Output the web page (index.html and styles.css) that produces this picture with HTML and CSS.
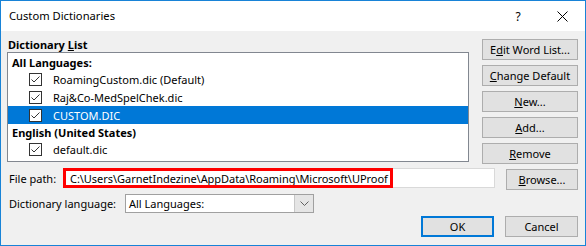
FILE: index.html
```html
<!DOCTYPE html>
<html>
<head>
<meta charset="utf-8">
<link rel="stylesheet" href="styles.css">
</head>
<body>
<div class="window">
  <div class="titlebar">
    <span class="title">Custom Dictionaries</span>
    <span class="help">?</span>
    <svg class="close" width="11" height="11" viewBox="0 0 11 11"><path d="M0.5 0.5 L10.5 10.5 M10.5 0.5 L0.5 10.5" stroke="#000" stroke-width="1" fill="none"/></svg>
  </div>
  <div class="content">
    <div class="top">
      <div class="listcol">
        <div class="listlabel">Dictionary <u>L</u>ist</div>
        <div class="listbox">
          <div class="group">All Languages:</div>
          <div class="item">
            <svg class="cb" width="13" height="13" viewBox="0 0 13 13"><rect x="0.5" y="0.5" width="12" height="12" fill="#fff" stroke="#333"/><path d="M2.5 6.5 L5 9 L10.5 3.5" stroke="#333" stroke-width="1" fill="none"/></svg>
            <span>RoamingCustom.dic (Default)</span>
          </div>
          <div class="item">
            <svg class="cb" width="13" height="13" viewBox="0 0 13 13"><rect x="0.5" y="0.5" width="12" height="12" fill="#fff" stroke="#333"/><path d="M2.5 6.5 L5 9 L10.5 3.5" stroke="#333" stroke-width="1" fill="none"/></svg>
            <span>Raj&amp;Co-MedSpelChek.dic</span>
          </div>
          <div class="item selected">
            <svg class="cb" width="13" height="13" viewBox="0 0 13 13"><rect x="0.5" y="0.5" width="12" height="12" fill="#fff" stroke="#333"/><path d="M2.5 6.5 L5 9 L10.5 3.5" stroke="#333" stroke-width="1" fill="none"/></svg>
            <span>CUSTOM.DIC</span>
          </div>
          <div class="group">English (United States)</div>
          <div class="item">
            <svg class="cb" width="13" height="13" viewBox="0 0 13 13"><rect x="0.5" y="0.5" width="12" height="12" fill="#fff" stroke="#333"/><path d="M2.5 6.5 L5 9 L10.5 3.5" stroke="#333" stroke-width="1" fill="none"/></svg>
            <span>default.dic</span>
          </div>
        </div>
      </div>
      <div class="buttons">
        <div class="btn">E<u>d</u>it Word List...</div>
        <div class="btn"><u>C</u>hange Default</div>
        <div class="btn"><u>N</u>ew...</div>
        <div class="btn"><u>A</u>dd...</div>
        <div class="btn"><u>R</u>emove</div>
      </div>
    </div>
    <div class="pathrow">
      <span class="pathlabel">File path:</span>
      <div class="pathbox">
        <span class="pathtext">C:\Users\GarnetIndezine\AppData\Roaming\Microsoft\UProof</span>
        <div class="redbox"></div>
      </div>
      <div class="btn browse"><u>B</u>rowse...</div>
    </div>
    <div class="langrow">
      <span class="langlabel">Dictionary lan<u>g</u>uage:</span>
      <div class="combo">
        <span class="combotext">All Languages:</span>
        <div class="dropbtn">
          <svg width="9" height="5" viewBox="0 0 9 5"><path d="M0.5 0.5 L4.5 4.5 L8.5 0.5" stroke="#606060" stroke-width="1" fill="none"/></svg>
        </div>
      </div>
    </div>
    <div class="actions">
      <div class="btn ok">OK</div>
      <div class="btn cancel">Cancel</div>
    </div>
  </div>
</div>
</body>
</html>
```

FILE: styles.css
```css
* { box-sizing: border-box; }
html, body { margin: 0; padding: 0; }
body {
  width: 586px;
  height: 246px;
  overflow: hidden;
  font-family: "Noto Sans", "DejaVu Sans", sans-serif;
  font-size: 11px;
  color: #000;
}
u { text-decoration: underline; text-underline-offset: 1px; }
.window {
  width: 586px;
  height: 246px;
  border: 1px solid #1883d7;
  background: #f0f0f0;
  display: flex;
  flex-direction: column;
}
.titlebar {
  height: 30px;
  background: #fff;
  display: flex;
  align-items: center;
  flex-shrink: 0;
}
.title {
  flex: 1;
  padding-left: 8px;
  font-size: 11.2px;
  padding-bottom: 1px;
}
.help {
  width: 10px;
  text-align: center;
  font-size: 12px;
  margin-right: 34px;
}
.close {
  margin-right: 17px;
  margin-top: 1px;
}
.content {
  padding: 6px 7px 0 6px;
  display: flex;
  flex-direction: column;
  line-height: 15px;
}
.top {
  display: flex;
  gap: 13px;
}
.listcol {
  width: 462px;
  display: flex;
  flex-direction: column;
}
.listlabel {
  font-weight: bold;
  height: 15px;
  padding-left: 1px;
}
.listbox {
  height: 110px;
  background: #fff;
  border: 1px solid #828790;
  padding-top: 1px;
}
.group {
  height: 16px;
  display: flex;
  align-items: center;
  padding-left: 4px;
  font-weight: bold;
}
.item {
  height: 18px;
  display: flex;
  align-items: center;
  padding-left: 21px;
}
.item .cb { margin-right: 11px; flex-shrink: 0; }
.item.selected {
  background: #0078d7;
  color: #fff;
}
.buttons {
  width: 96px;
  margin-top: 2px;
  display: flex;
  flex-direction: column;
  gap: 5px;
}
.btn {
  height: 21px;
  background: #e1e1e1;
  border: 1px solid #adadad;
  display: flex;
  align-items: center;
  justify-content: center;
}
.pathrow {
  margin-top: 4px;
  display: flex;
  align-items: flex-start;
}
.pathlabel {
  width: 56px;
  padding-left: 2px;
  height: 20px;
  display: flex;
  align-items: center;
}
.pathbox {
  position: relative;
  width: 432px;
  height: 20px;
  background: #fff;
  border: 1px solid #d9d9d9;
  display: flex;
  align-items: center;
  padding-left: 6px;
}
.pathtext { letter-spacing: -0.04px; }
.redbox {
  position: absolute;
  left: -1px;
  top: -1px;
  width: 330px;
  height: 20px;
  border: 3px solid #ff0000;
}
.browse {
  width: 72px;
  margin-left: 11px;
  margin-top: 1px;
}
.langrow {
  margin-top: 4px;
  display: flex;
  align-items: center;
}
.langlabel {
  width: 118px;
  padding-left: 2px;
}
.combo {
  width: 189px;
  height: 19px;
  background: #fff;
  border: 1px solid #a0a0a0;
  display: flex;
  align-items: center;
}
.combotext {
  flex: 1;
  padding-left: 3px;
}
.dropbtn {
  width: 19px;
  height: 17px;
  background: #e5e5e5;
  border-left: 1px solid #c8c8c8;
  display: flex;
  align-items: center;
  justify-content: center;
}
.actions {
  margin-top: 3px;
  display: flex;
  justify-content: flex-end;
  gap: 11px;
}
.ok, .cancel { width: 73px; }
.ok { border: 2px solid #0078d7; }
```
